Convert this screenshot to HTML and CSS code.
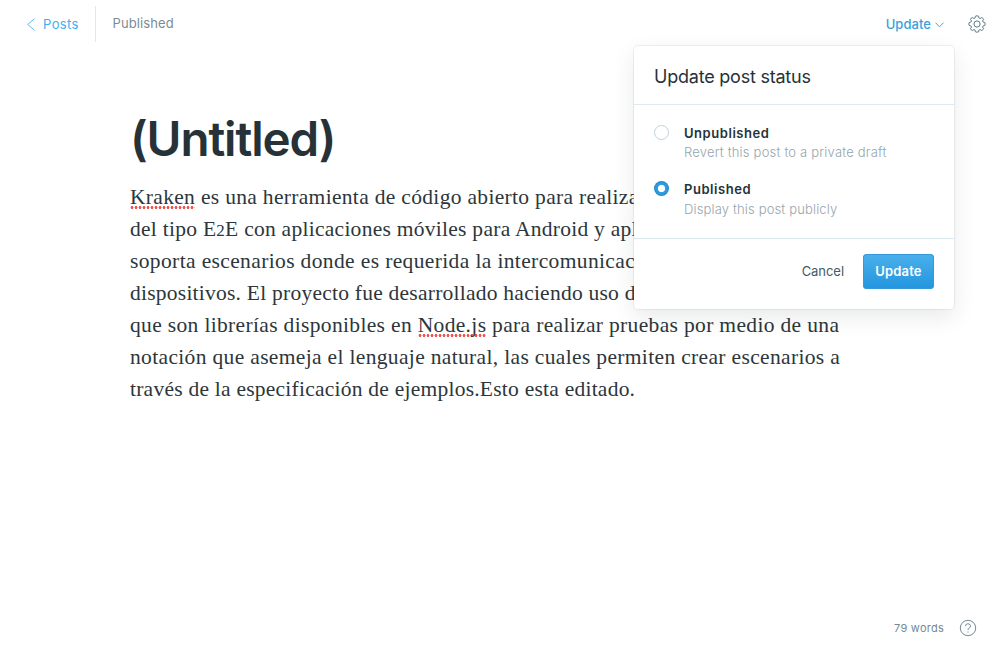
FILE: index.html
```
<!DOCTYPE html>
<html lang="es">
<head>
<meta charset="utf-8">
<title>Editor</title>
<link rel="stylesheet" href="styles.css">
</head>
<body>
<div class="editor">
  <header class="topbar">
    <a class="back"><svg width="8" height="13" viewBox="0 0 8 13"><path d="M7.5 .7 .7 6.5l6.8 5.8"/></svg><span>Posts</span></a>
    <div class="state">Published</div>
    <div class="actions">
      <a class="trigger"><span>Update</span><svg width="9" height="6" viewBox="0 0 9 6"><path d="M.5 .7 4.5 4.8 8.5 .7"/></svg></a>
      <svg class="gear" width="18" height="18" viewBox="0 0 18 18"><path d="M7.4 1.2Q9 .4 10.6 1.2L11 3.1Q11.4 3.6 12 3.5L13.7 2.5Q15 3 15.5 4.3L14.6 6Q14.5 6.6 15 7L16.8 7.5Q17.5 9 16.8 10.5L15 11Q14.5 11.4 14.6 12L15.5 13.7Q15 15 13.7 15.5L12 14.6Q11.4 14.5 11 15L10.6 16.8Q9 17.6 7.4 16.8L7 15Q6.6 14.5 6 14.6L4.3 15.5Q3 15 2.5 13.7L3.5 12Q3.6 11.4 3.1 11L1.2 10.5Q.4 9 1.2 7.5L3.1 7Q3.6 6.6 3.5 6L2.5 4.3Q3 3 4.3 2.5L6 3.5Q6.6 3.6 7 3.1Z"/><circle cx="9" cy="9" r="3.1"/></svg>
    </div>
  </header>
  <main class="post">
    <h1 class="title">(Untitled)</h1>
    <p class="body">
      <span class="line l1"><span class="typo">Kraken</span> es una herramienta de código abierto para realiza</span>
      <span class="line l2">del tipo E<span class="old">2</span>E con aplicaciones móviles para Android y apl</span>
      <span class="line l3">soporta escenarios donde es requerida la intercomunicac</span>
      <span class="line l4">dispositivos. El proyecto fue desarrollado haciendo uso d</span>
      <span class="line l5">que son librerías disponibles en <span class="typo">Node.js</span> para realizar pruebas por medio de una</span>
      <span class="line l6">notación que asemeja el lenguaje natural, las cuales permiten crear escenarios a</span>
      <span class="line l7">través de la especificación de ejemplos.Esto esta editado.</span>
    </p>
  </main>
  <footer class="status"><span>79 words</span><svg width="18" height="18" viewBox="0 0 18 18"><circle cx="9" cy="9" r="7.7"/><path d="M6.5 7.1a2.5 2.3 0 1 1 3.6 2Q9 9.7 9 11"/><path d="M9 12.4v1.1"/></svg></footer>
  <section class="menu">
    <h2 class="menu-title">Update post status</h2>
    <div class="options">
      <div class="option"><i class="radio"></i><div><div class="label">Unpublished</div><div class="hint">Revert this post to a private draft</div></div></div>
      <div class="option"><i class="radio on"></i><div><div class="label">Published</div><div class="hint low">Display this post publicly</div></div></div>
    </div>
    <div class="buttons"><a class="cancel">Cancel</a><a class="update">Update</a></div>
  </section>
</div>
</body>
</html>
```
FILE: styles.css
```
* { box-sizing: border-box; }
body { margin: 0; background: #fff; font-family: Inter, sans-serif; color: #263238; }
svg { fill: none; display: block; }
.editor { position: relative; width: 1000px; height: 660px; overflow: hidden; display: flex; flex-direction: column; }
.topbar { height: 48px; padding: 6px 14px 6px 27px; display: flex; font-size: 13px; line-height: 36px; flex: none; }
.back { width: 69px; display: flex; align-items: center; gap: 8px; color: #3eb0ef; letter-spacing: .4px; border-right: 1px solid #dfeaf0; }
.back svg { stroke: #5dbcf1; }
.state { margin-left: 16.5px; color: #7c8b93; letter-spacing: .1px; line-height: 35px; }
.actions { margin-left: auto; display: flex; align-items: center; gap: 24px; }
.trigger { display: flex; align-items: center; gap: 4px; color: #3a9fdd; font-weight: 500; letter-spacing: .05px; }
.trigger svg { stroke: #4f9fc8; margin-top: 2px; }
.gear { stroke: #607883; }
.post { padding: 62px 130px 0; flex: 1; }
.title { margin: 0; font-size: 47.5px; line-height: 57px; font-weight: 600; letter-spacing: -1.1px; }
.body { margin: 14px 0 0; font-family: "Liberation Serif", serif; font-size: 21.5px; line-height: 32px; color: #2c363b; }
.line { display: block; height: 32px; white-space: nowrap; letter-spacing: .34px; }
.l1 { letter-spacing: .32px; }
.l2 { letter-spacing: .27px; }
.l3 { letter-spacing: .37px; }
.l4, .l7 { letter-spacing: .24px; }
.old { font-size: 17px; line-height: 0; }
.typo { background: radial-gradient(circle, #ef5753 1.2px, transparent 1.7px) 0 100% / 4px 3px repeat-x; }
.status { height: 64px; padding: 0 23px 0 0; display: flex; align-items: center; justify-content: flex-end; gap: 15px; font-size: 11px; letter-spacing: .25px; color: #738a94; flex: none; }
.status svg { stroke: #738a94; }
.menu { position: absolute; left: 634px; top: 46px; width: 320px; height: 263px; background: #fff; border-radius: 4px; box-shadow: 0 0 0 1px rgba(99,114,130,.1), 0 8px 22px rgba(27,39,51,.1); }
.menu-title { margin: 0; height: 59px; padding: 0 20px; border-bottom: 1px solid #dceaf1; font-size: 18px; line-height: 61px; font-weight: 400; letter-spacing: -.22px; }
.options { height: 134px; padding: 19px 20px 0; border-bottom: 1px solid #dceaf1; display: grid; grid-template-rows: 56px 56px; }
.option { display: flex; gap: 15px; font-size: 13px; }
.radio { width: 15px; height: 15px; border-radius: 50%; border: 1px solid #b9d3e3; margin-top: 1px; }
.radio.on { border: 0; background: radial-gradient(circle, #fff 3.3px, #2e9fe3 4px, #2b98dd 6px, #2089cc 7px); }
.label { font-weight: 600; line-height: 18px; letter-spacing: .55px; }
.hint { color: #96a5ac; font-weight: 300; line-height: 21px; letter-spacing: .2px; }
.low { line-height: 23px; letter-spacing: .15px; }
.buttons { display: flex; justify-content: flex-end; align-items: center; gap: 19px; padding: 15px 20px 0 0; font-size: 13px; }
.cancel { color: #455a64; line-height: 34px; height: 35px; letter-spacing: -.05px; }
.update { width: 71px; height: 35px; border-radius: 4px; background: linear-gradient(#4bb0ec, #2295de); box-shadow: inset 0 0 0 1px #3499dc; color: #fff; font-weight: 600; line-height: 35px; text-align: center; letter-spacing: .15px; }
```
